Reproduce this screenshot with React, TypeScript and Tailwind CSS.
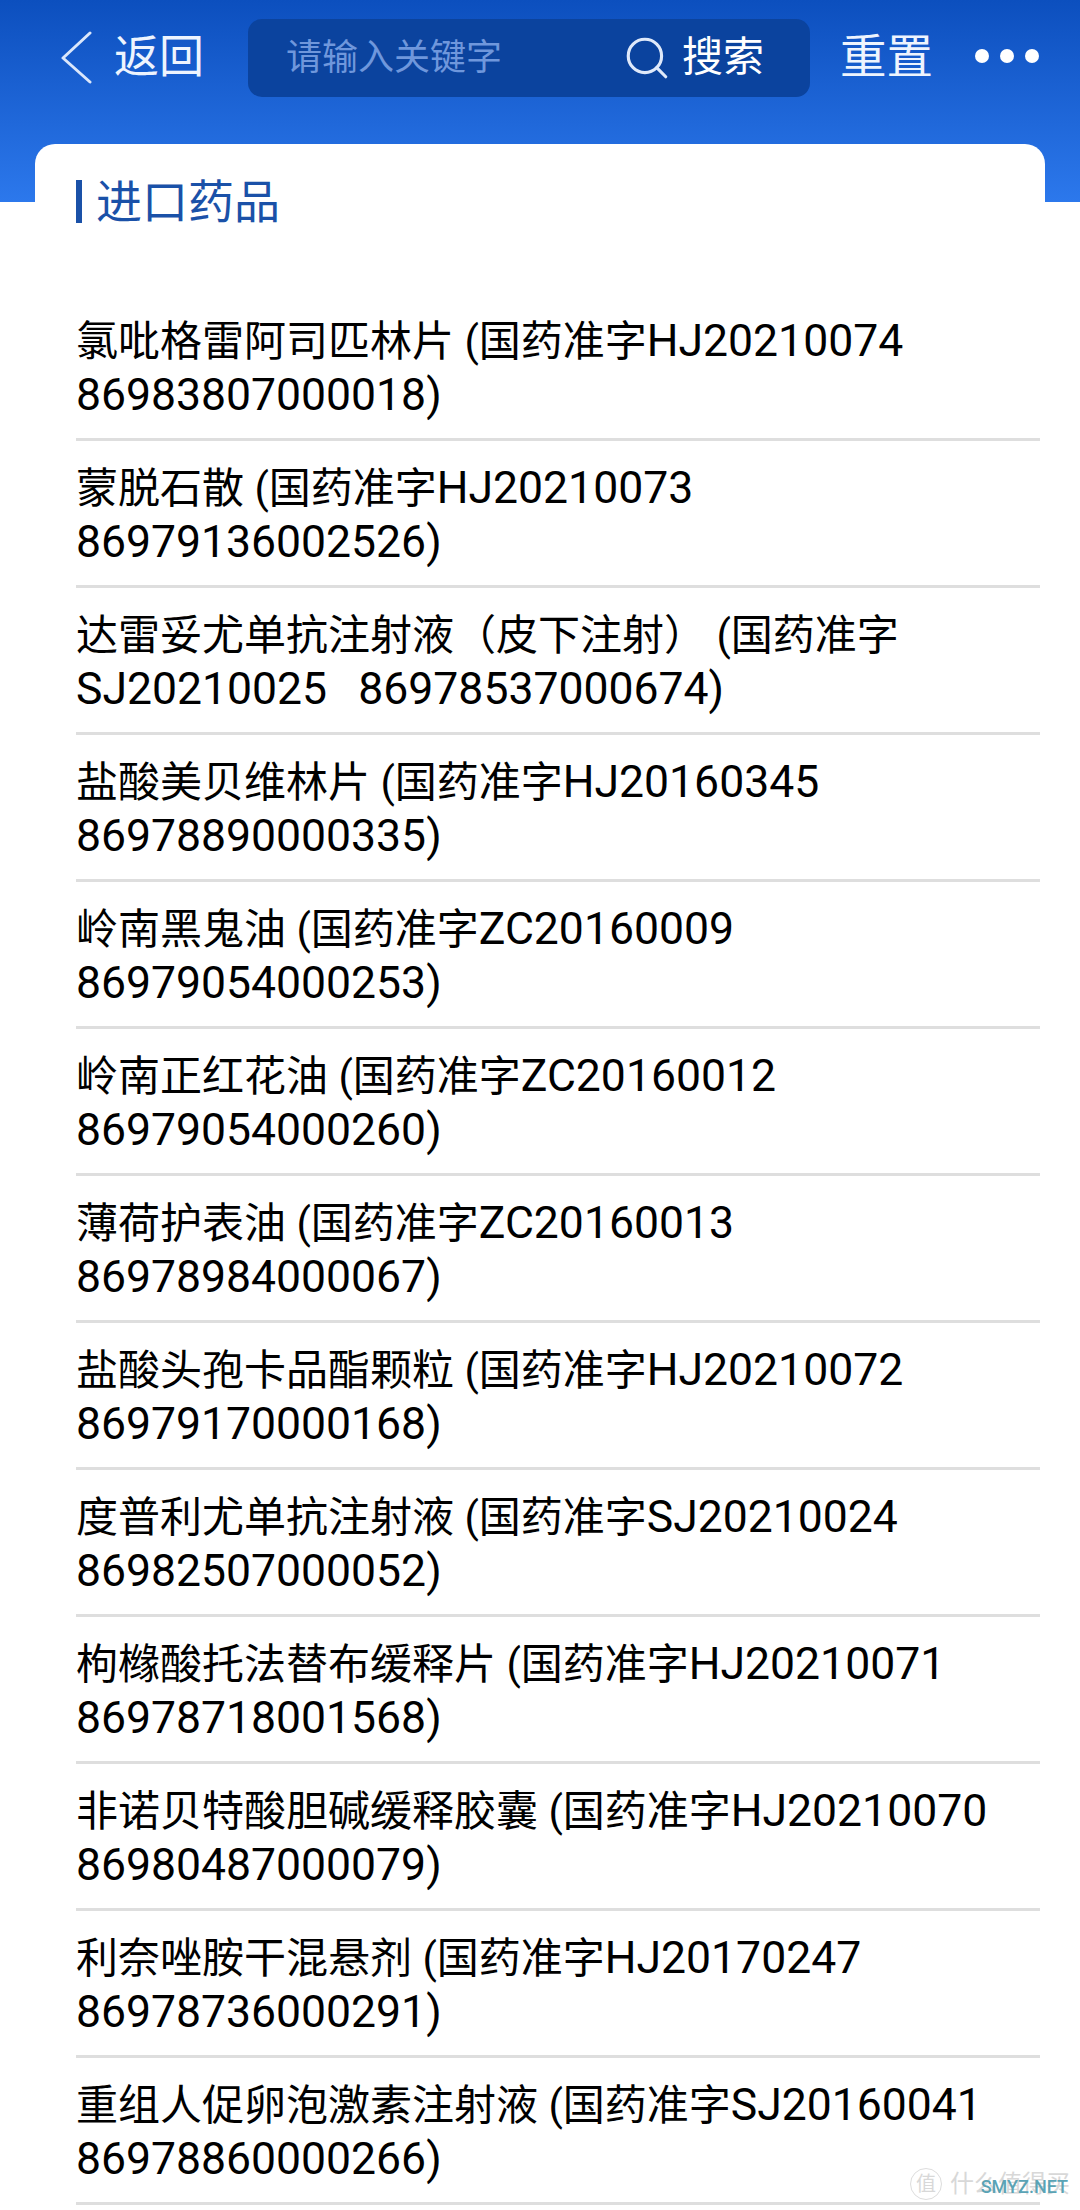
import { Search } from 'lucide-react';

const drugs: [string, string][] = [
  ['氯吡格雷阿司匹林片 (国药准字HJ20210074', '86983807000018)'],
  ['蒙脱石散 (国药准字HJ20210073', '86979136002526)'],
  ['达雷妥尤单抗注射液（皮下注射） (国药准字', 'SJ20210025   86978537000674)'],
  ['盐酸美贝维林片 (国药准字HJ20160345', '86978890000335)'],
  ['岭南黑鬼油 (国药准字ZC20160009', '86979054000253)'],
  ['岭南正红花油 (国药准字ZC20160012', '86979054000260)'],
  ['薄荷护表油 (国药准字ZC20160013', '86978984000067)'],
  ['盐酸头孢卡品酯颗粒 (国药准字HJ20210072', '86979170000168)'],
  ['度普利尤单抗注射液 (国药准字SJ20210024', '86982507000052)'],
  ['枸橼酸托法替布缓释片 (国药准字HJ20210071', '86978718001568)'],
  ['非诺贝特酸胆碱缓释胶囊 (国药准字HJ20210070', '86980487000079)'],
  ['利奈唑胺干混悬剂 (国药准字HJ20170247', '86978736000291)'],
  ['重组人促卵泡激素注射液 (国药准字SJ20160041', '86978860000266)'],
];

// latin runs sit a bit larger than the CJK ones in the picture
function DrugLine({ text }: { text: string }) {
  const parts = text.split(/([A-Z0-9]+\)?)/);
  return (
    <div className="h-[54px]">
      {parts.map((part, i) =>
        i % 2 === 1 ? (
          <span key={i} className="text-[44.5px] leading-[40px]">
            {part}
          </span>
        ) : (
          <span key={i}>{part}</span>
        ),
      )}
    </div>
  );
}

export default function App() {
  return (
    <div className="relative h-[2210px] w-[1080px] overflow-hidden bg-white font-['Roboto','Noto_Sans_CJK_SC',sans-serif] text-black">
      {/* Header */}
      <div className="h-[202px] bg-gradient-to-b from-[#0c4fbe] to-[#2c78ec] pt-[18px]">
        <div className="flex h-[79px] items-center">
          <svg className="ml-[60px] h-[53px] w-[32px] text-[#dbe7fb]" viewBox="0 0 32 53" fill="none">
            <path d="M30 2 3 27l27 24" stroke="currentColor" strokeWidth="3" strokeLinecap="round" strokeLinejoin="round" />
          </svg>
          <span className="ml-[22px] w-[90px] text-[45px] leading-none text-[#eef4fe]">返回</span>
          <div className="ml-[44px] flex h-[78px] w-[562px] items-center rounded-[14px] bg-[#0b439e] pl-[38px]">
            <span className="w-[216px] text-[36px] text-[#6f97dc]">请输入关键字</span>
            <Search className="ml-[120px] h-[50px] w-[50px] text-[#dfe9fa]" strokeWidth={1.5} />
            <span className="ml-[10px] text-[41px] text-white">搜索</span>
          </div>
          <span className="ml-[30px] w-[93px] text-[46.5px] leading-none text-[#eef4fe]">重置</span>
          <div className="ml-[42px] flex -translate-y-[2px] gap-[11px]">
            <span className="h-[14px] w-[14px] rounded-full bg-white" />
            <span className="h-[14px] w-[14px] rounded-full bg-white" />
            <span className="h-[14px] w-[14px] rounded-full bg-white" />
          </div>
        </div>
      </div>

      {/* Card */}
      <div className="mx-[35px] -mt-[58px] rounded-t-[20px] bg-white pl-[41px] pr-[5px]">
        <div className="flex h-[150px] items-start pt-[36px]">
          <span className="h-[43px] w-[6px] bg-[#1a51a8]" />
          <span className="ml-[14px] text-[46px] leading-[45px] text-[#1a51a8]">进口药品</span>
        </div>
        {drugs.map(([first, second]) => (
          <div key={second} className="whitespace-pre border-b-[3px] border-[#dedede] pb-[15px] pt-[21px] text-[42px] leading-[54px]">
            <DrugLine text={first} />
            <DrugLine text={second} />
          </div>
        ))}
      </div>

      {/* Watermark */}
      <div className="absolute bottom-[8px] right-[10px] flex items-center gap-[8px] text-[#d8d8d8]">
        <span className="flex h-[32px] w-[32px] items-center justify-center rounded-full border border-[#dddddd] text-[20px]">值</span>
        <span className="text-[24px]">什么值得买</span>
      </div>
      <span className="absolute bottom-[10px] right-[12px] text-[18px] font-medium text-[#5aa3b5]">SMYZ.NET</span>
    </div>
  );
}
